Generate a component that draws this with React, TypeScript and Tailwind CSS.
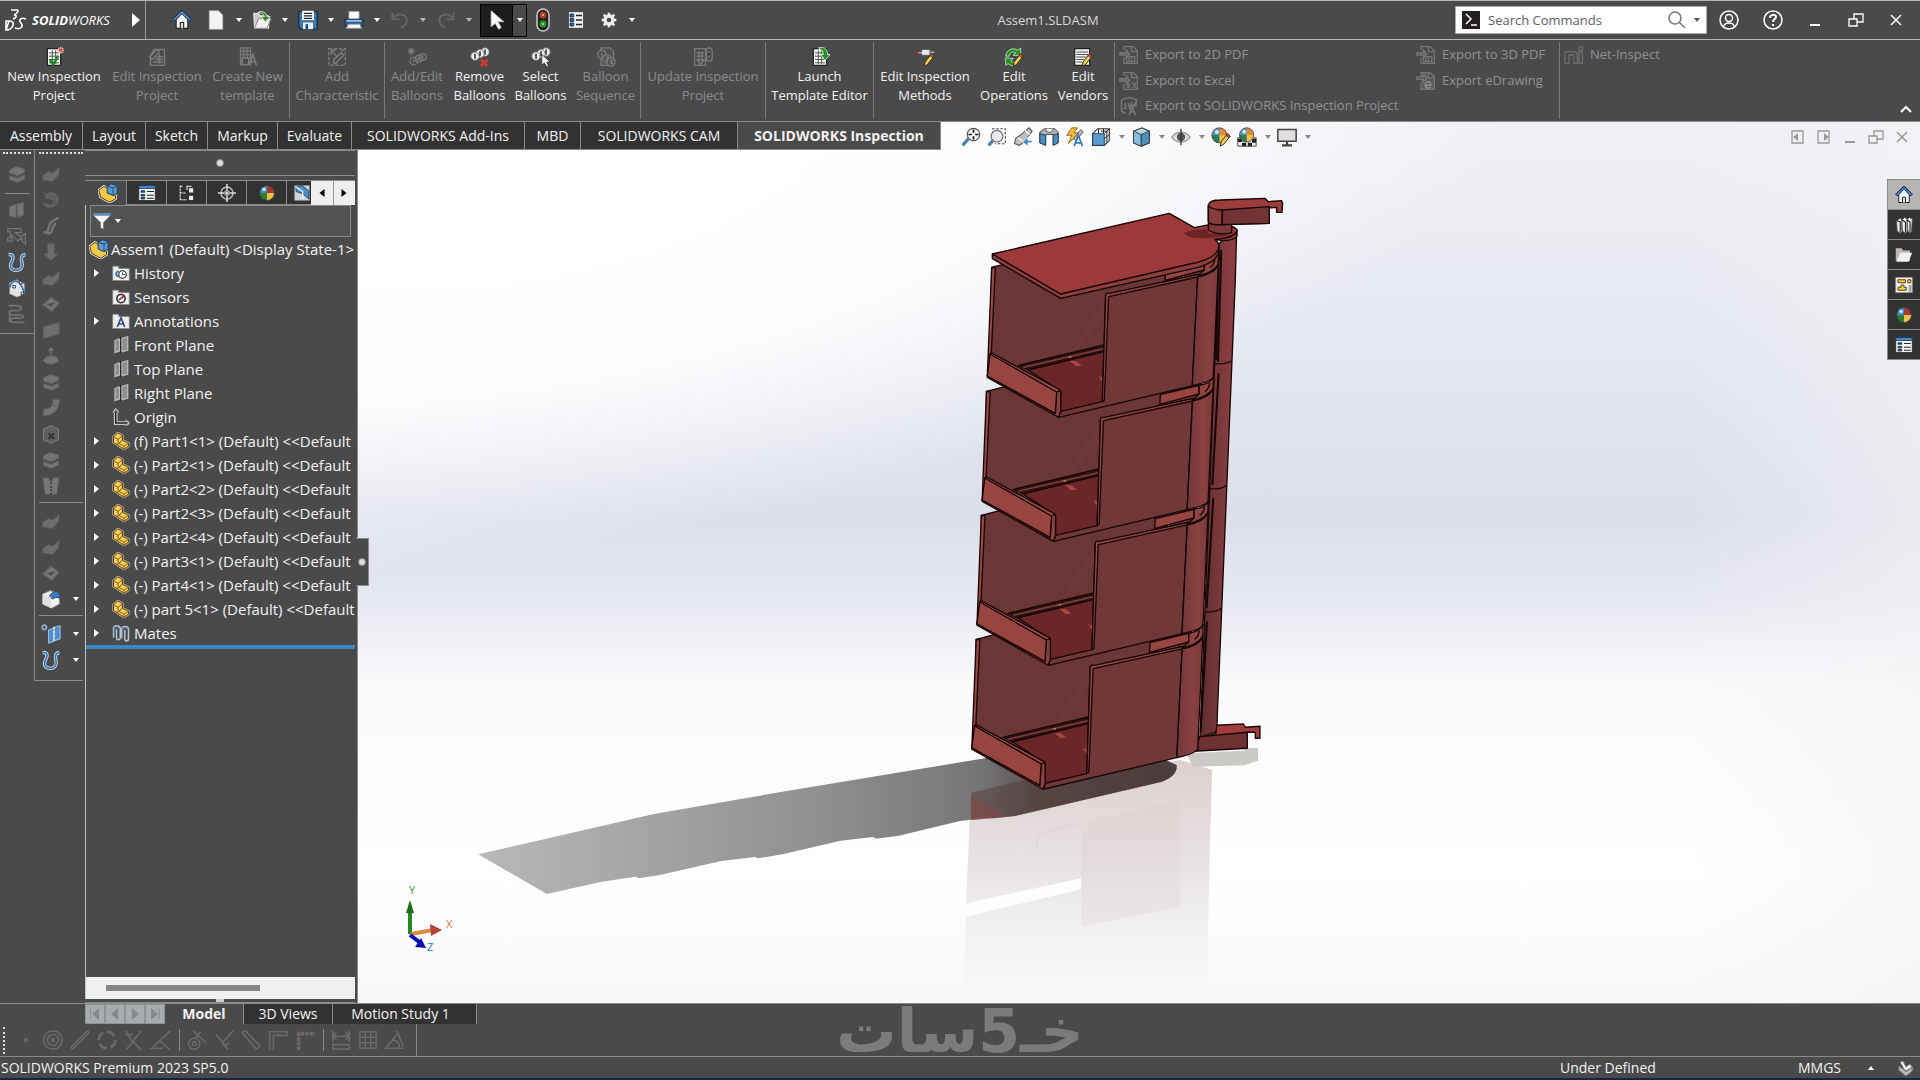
import type { ReactNode } from 'react';
import clsx from 'clsx';

const sheet = (
    <>
        <path d="M4 2h16v20H4z" fill="#f4f4f4" stroke="#222" strokeWidth="1.5" />
        <path d="M6 7h12M6 11h12M6 15h12M6 19h12M10 4v16M14 4v16" stroke="#555" strokeWidth="1.2" />
    </>
);

const pencil = (
    <>
        <path d="M20 8l3 3-8 10-4 2 1-5z" fill="#f0cf55" stroke="#3a2b10" strokeWidth="1.2" />
        <path d="M20 8l3 3-2 2-3-3z" fill="#d0524d" stroke="#3a2b10" />
    </>
);

const balloons = (
    <g fill="#eee" stroke="#777" strokeWidth="1">
        <circle cx="18" cy="6" r="5" />
        <circle cx="12" cy="8" r="5" />
        <circle cx="6" cy="11" r="5" />
        <path d="M6 8v6M12 5v6M18 3v6" stroke="#111" strokeWidth="1.6" />
    </g>
);

const globe = (
    <>
        <circle cx="12" cy="12" r="10" fill="#3c8bc4" />
        <path d="M12 12V2a10 10 0 0 1 10 10z" fill="#a93832" />
        <path d="M12 12h10a10 10 0 0 1-10 10z" fill="#f2c14b" />
        <path d="M12 12v10A10 10 0 0 1 2 12z" fill="#2d7d2d" />
        <circle cx="8" cy="7" r="2.5" fill="#bfe0f4" />
        <circle cx="12" cy="12" r="10" fill="none" stroke="#333" />
    </>
);

// half colour wheel, half wire mesh
const meshGlobe = (
    <>
        <circle cx="10" cy="10" r="9" fill="#4a93c9" />
        <path d="M10 10V1a9 9 0 0 1 9 9z" fill="#e08a3a" />
        <path d="M10 10h9a9 9 0 0 1-9 9z" fill="#f2c14b" />
        <path d="M10 10v9A9 9 0 0 1 1 10z" fill="#2d7d4d" />
        <circle cx="7" cy="6" r="2.5" fill="#cfe8f7" />
        <circle cx="10" cy="10" r="9" fill="none" stroke="#444" />
    </>
);

const house = (
    <>
        <path d="M5 11v11h14V11l-7-7z" fill="#f5f5f5" stroke="#222" strokeWidth="1.3" />
        <path d="M10 22v-7h4v7" fill="#ddd" stroke="#222" strokeWidth="1.3" />
        <path d="M1.5 12.5L12 2l10.5 10.5" fill="none" stroke="#16325c" strokeWidth="4" />
        <path d="M2 12L12 2.5 22 12" fill="none" stroke="#5f94cc" strokeWidth="1.8" />
    </>
);

const icons: Record<string, ReactNode> = {
    home: house,
    file: <path d="M4 1h11l5 5v17H4z" fill="#f4f4f4" stroke="#bbb" />,
    open: (
        <>
            <path d="M2 4h6l2 3h10v15H3z" fill="#cfcbc8" stroke="#fff" />
            <path d="M8 10h15l-5 12H3z" fill="#f2f2f2" stroke="#777" />
            <path d="M7 3c6-3 10 0 11 5h4l-6 6-5-6h4c-1-3-4-5-8-5z" fill="#2c8a1e" stroke="#e8e8e8" />
        </>
    ),
    save: (
        <>
            <path d="M1 2h22v21H4l-3-3z" fill="#3f79ad" stroke="#0f2b4c" strokeWidth="1.5" />
            <path d="M5 1h14v11H5z" fill="#fff" />
            <path d="M7 4h10M7 7h10M7 10h10" stroke="#222" strokeWidth="1.3" />
            <path d="M6 15h12v8H6z" fill="#efefef" />
            <path d="M9 17h3v6H9z" fill="#1f4a78" />
        </>
    ),
    print: (
        <>
            <path d="M6 2h12v9H6z" fill="#fff" stroke="#bbb" />
            <path d="M1 11h22v8H1z" fill="#2d5f8e" stroke="#10294a" />
            <path d="M3 13h18" stroke="#9fc8ea" strokeWidth="2" />
            <path d="M5 17h14l2 5H3z" fill="#f7f7f7" stroke="#999" />
        </>
    ),
    undo: <path d="M3 3v8h8M4 10c4-7 16-6 16 3 0 4-3 7-7 8" fill="none" stroke="#777" strokeWidth="2.5" />,
    redo: <path d="M21 3v8h-8M20 10C16 3 4 4 4 13c0 4 3 7 7 8" fill="none" stroke="#777" strokeWidth="2.5" />,
    cursor: <path d="M5 1v19l5-4 4 7 3-2-4-7h7z" fill="#fff" stroke="#ccc" />,
    traffic: (
        <>
            <rect x="6" y="1" width="12" height="22" rx="6" fill="#222" stroke="#ccc" strokeWidth="1.5" />
            <circle cx="12" cy="7" r="3.5" fill="#b33a22" />
            <circle cx="12" cy="16" r="3.5" fill="#259a25" />
            <path d="M12 6v2M12 15v2" stroke="#fff" />
        </>
    ),
    list: (
        <>
            <path d="M2 1h20v22H2z" fill="#f4f4f4" stroke="#333" />
            <path d="M4 4h5v4H4zM4 10h5v4H4zM4 16h5v4H4z" fill="#27639b" stroke="#123" />
            <path d="M12 6h8M12 12h8M12 18h8" stroke="#222" strokeWidth="2" />
        </>
    ),
    props: (
        <>
            <path d="M1 2h22v20H1z" fill="#f4f4f4" stroke="#222" />
            <path d="M1 2h22v4H1z" fill="#3f86c4" stroke="#14304f" />
            <path d="M4 9h5v2H4zM4 14h5v2H4zM4 18h5v2H4z" fill="#27639b" stroke="#123" />
            <path d="M12 10h9M12 15h9M12 19h9" stroke="#222" strokeWidth="1.5" />
        </>
    ),
    gear: (
        <>
            <circle cx="12" cy="12" r="6" fill="none" stroke="#eee" strokeWidth="5" />
            <path d="M12 1v4M12 19v4M1 12h4M19 12h4M4 4l3 3M17 17l3 3M4 20l3-3M17 7l3-3" stroke="#eee" strokeWidth="4" />
        </>
    ),
    newProject: (
        <>
            {sheet}
            <path d="M7 15l4 6 6-10" fill="none" stroke="#1d8a1d" strokeWidth="3" />
            <path d="M20 0v8M16 4h8M17 1l6 6M23 1l-6 6" stroke="#f2b8a0" strokeWidth="1.5" />
            <circle cx="20" cy="4" r="1.8" fill="#d33" />
        </>
    ),
    editProject: (
        <g fill="none" stroke="#7c7c7c" strokeWidth="1.6">
            <path d="M8 3h13v19H4V12zM12 3l-9 9 3 3 9-9zM11 12h8M9 15h10M7 18h12M15 8v12" />
        </g>
    ),
    template: (
        <g fill="none" stroke="#7a7a7a" strokeWidth="1.5">
            <path d="M3 1h12v20H3zM3 5h12M3 9h12M7 1v12M11 1v12" />
            <path d="M5 13h8v8H5zM14 22l4-13 4 13M15 18h6" strokeWidth="2" />
        </g>
    ),
    characteristic: (
        <g fill="none" stroke="#7a7a7a" strokeWidth="1.8">
            <path d="M2 2h20v20H2z" strokeDasharray="4 2" />
            <path d="M5 4l8 9M5 4v6M5 4h6M8 20v-5l9-8 3 3-9 9zM17 4h4" />
        </g>
    ),
    addBalloons: (
        <g fill="none" stroke="#7c7c7c" strokeWidth="1.5">
            <circle cx="19" cy="12" r="4" />
            <circle cx="14" cy="14" r="4" />
            <circle cx="8" cy="17" r="4.5" />
            <path d="M8 15v4M14 12v4M19 10v4M5 1v9M1 5h9M2 2l6 6M8 2L2 8" />
        </g>
    ),
    removeBalloons: <>{balloons}<path d="M13 15l8 8M21 15l-8 8" stroke="#cf3b35" strokeWidth="3.5" /></>,
    selectBalloons: <>{balloons}<path d="M13 9v13l3-3 3 5 2-1-2-5h4z" fill="#fff" stroke="#333" /></>,
    sequence: (
        <g fill="#505050" stroke="#7c7c7c" strokeWidth="1.5">
            <path d="M6 1h11l4 4v17H6z" />
            <circle cx="7" cy="9" r="5" />
            <circle cx="13" cy="14" r="5" />
            <circle cx="18" cy="18" r="5" />
            <path d="M7 7v5M12 12h3l-3 4h3M17 16h3l-2 2 2 2h-3" fill="none" />
        </g>
    ),
    update: (
        <g fill="none" stroke="#7c7c7c" strokeWidth="1.5">
            <path d="M2 2h13v20H2zM4 7h9M4 11h9M4 15h9M7 5v13M11 5v13M5 16l4 5 5-6" />
            <rect x="16" y="1" width="7" height="16" rx="3.5" />
            <path d="M19 5v2M19 11v2" strokeWidth="2.5" />
        </g>
    ),
    launch: <>{sheet}<path d="M10 1c8-2 11 2 11 8h3l-6 7-5-7h3c0-4-2-6-6-8z" fill="#219122" stroke="#dfe8df" /></>,
    methods: (
        <>
            <path d="M1 6h7V3h10v7H8V8H1z" fill="#e8e8e8" stroke="#555" />
            <path d="M18 5h5v3h-5z" fill="#bbb" stroke="#555" />
            <circle cx="2" cy="7" r="2" fill="#b23" />
            {pencil}
        </>
    ),
    operations: (
        <>
            <path d="M2 11C3 3 11 0 17 4l3-3v9h-9l3-3c-4-2-7 0-8 4z" fill="#219122" stroke="#cfe6cf" />
            <path d="M2 13v9l3-2c2 2 5 3 8 2l-1-4c-2 0-3 0-4-1l3-3z" fill="#219122" stroke="#cfe6cf" />
            {pencil}
        </>
    ),
    vendors: (
        <>
            <path d="M2 2h18v20H2z" fill="#f4f4f4" stroke="#222" strokeWidth="1.5" />
            <path d="M4 6h14M4 9h14M4 12h12M4 15h9M4 18h7" stroke="#555" strokeWidth="1.3" />
            {pencil}
        </>
    ),
    exportDoc: (
        <g fill="none" stroke="#777" strokeWidth="1.5">
            <path d="M6 6V2h11l5 5v15H6v-7M15 2v6h7" />
            <path d="M1 9h8V6l4 5-4 4v-3H1z" fill="#666" />
            <path d="M9 14h10v6H9zM12 14v6M15 14v6" />
        </g>
    ),
    exportExcel: (
        <g fill="none" stroke="#777" strokeWidth="1.5">
            <path d="M6 6V2h11l5 5v15H6v-7M15 2v6h7" />
            <path d="M1 9h8V6l4 5-4 4v-3H1z" fill="#666" />
            <path d="M9 16h5M9 19h5M11 14v7M16 13l5 8M21 13l-5 8" />
        </g>
    ),
    exportDrawing: (
        <g fill="none" stroke="#777" strokeWidth="1.5">
            <path d="M6 6V2h11l5 5v15H6v-7M15 2v6h7" fill="#5c5a58" />
            <path d="M1 7h8V4l4 5-4 4v-3H1z" fill="#555" />
            <path d="M11 17h7c0-6-7-5-7 0 0 4 5 4 7 2" stroke="#8a8a8a" strokeWidth="2" />
        </g>
    ),
    exportProject: (
        <g fill="none" stroke="#777" strokeWidth="1.8">
            <path d="M3 5c6-4 12-4 18 0l-1 8M3 5v13l5 3M8 8c-3 4 2 3 0 7H5M11 8l2 7 2-6 2 6 2-7M12 23l4-9 4 9M13 19h6" />
        </g>
    ),
    net: (
        <g fill="none" stroke="#6e6e6e" strokeWidth="1.5">
            <path d="M1 22V8h11c3 0 4 2 4 4v10h-4V12H6v10zM18 8h4v14h-4z" />
            <circle cx="20" cy="4" r="2.5" />
        </g>
    ),
    zoomFit: (
        <>
            <path d="M9 14l-7 8" stroke="#4a83b5" strokeWidth="4" />
            <circle cx="15" cy="9" r="7.5" fill="#f6f6f6" stroke="#555" strokeWidth="1.5" />
            <path d="M15 3v4M15 11v4M9 9h4M17 9h4" stroke="#111" strokeWidth="2" />
        </>
    ),
    zoomArea: (
        <>
            <path d="M6 2h16v18H10" fill="none" stroke="#444" strokeWidth="1.3" strokeDasharray="3 2" />
            <path d="M8 15l-6 7" stroke="#4a83b5" strokeWidth="4" />
            <circle cx="12" cy="11" r="7" fill="#e6eaee" stroke="#777" strokeWidth="1.5" />
        </>
    ),
    prevView: (
        <>
            <path d="M19 1l4 4-3 4-7 9-5 4-6-2 1-6 8-6z" fill="#bfbfbf" stroke="#555" strokeWidth="1.3" />
            <path d="M6 13l7 5M14 4l6 5" stroke="#fff" strokeWidth="1.5" />
            <path d="M23 16h-5v-4l-7 6 7 5v-4h5z" fill="#3f86c4" stroke="#fff" />
        </>
    ),
    section: (
        <>
            <path d="M1 6l6-4h12l4 4v13l-6 3V9H8v13l-7-3z" fill="#a9afb4" stroke="#333" />
            <path d="M1 8l7 2v12l-7-3zM17 10l6-2v11l-6 3z" fill="#4a90c9" stroke="#234" />
            <path d="M8 2l2 4h5l2-4" fill="#fff" stroke="#555" />
        </>
    ),
    annotViews: (
        <>
            <path d="M8 1h7l-4 6h6L4 20l4-10H2z" fill="#f5b93c" stroke="#8a5a10" />
            <path d="M19 3l3 3-9 10-3-2z" fill="#bbb" stroke="#444" />
            <path d="M11 23l5-13 5 13M13 19h7" fill="none" stroke="#3478b8" strokeWidth="2" />
        </>
    ),
    orient: (
        <>
            <path d="M2 8l6-6h14v14l-6 6H2z" fill="#eee" stroke="#333" strokeWidth="1.3" />
            <path d="M2 8h14v14H2z" fill="#5a9bd0" stroke="#234" />
            <path d="M16 8l6-6M9 2v6M15 2v6M22 9l-6 5M19 5v14M12 5h8" stroke="#333" strokeWidth="1.2" />
        </>
    ),
    cube: (
        <>
            <path d="M3 5l10-4 9 4v14l-9 4-10-4z" fill="#b9d9ec" stroke="#333" strokeWidth="1.3" />
            <path d="M12 9l10-4v14l-10 4z" fill="#4e90bf" stroke="#333" />
            <path d="M3 5l9 4v14l-9-4z" fill="#86bcdd" stroke="#333" />
        </>
    ),
    eye: (
        <>
            <path d="M1 12c6-8 16-8 22 0-6 8-16 8-22 0z" fill="#ddd" stroke="#999" strokeWidth="1.5" />
            <circle cx="12" cy="12" r="5" fill="#555" />
            <path d="M12 2v20" stroke="#333" strokeWidth="1.5" />
        </>
    ),
    appearance: <>{meshGlobe}{pencil}</>,
    scene: (
        <>
            <path d="M1 13h22v10H1z" fill="#eee" stroke="#333" />
            <path d="M1 14h5v4H1zM6 19h5v4H6zM13 19h5v4h-5zM18 14h5v5h-5z" fill="#222" />
            <g transform="translate(2 0) scale(.95)">{meshGlobe}</g>
        </>
    ),
    monitor: (
        <>
            <path d="M1 3h22v14H1z" fill="#e3dfdf" stroke="#444" strokeWidth="1.8" />
            <path d="M12 17v4M6 22h12" stroke="#444" strokeWidth="2.5" />
        </>
    ),
    assembly: (
        <>
            <path d="M1 9l6-5 5 3v5l9 3v4l-7 4L3 17z" fill="#f3c94c" stroke="#eee" strokeWidth="3" />
            <path d="M1 9l6-5 5 3v5l9 3v4l-7 4L3 17z" fill="#f3c94c" stroke="#5c3c10" strokeWidth="1.2" />
            <path d="M11 4l5-3 7 2v9l-5 3-7-3z" fill="#5b9bd2" stroke="#1d3f63" strokeWidth="1.2" />
            <path d="M11 4l7 2v9M18 6l5-3" fill="none" stroke="#1d3f63" />
        </>
    ),
    part: (
        <>
            <path d="M2 6l6-5 6 4v6l8 4v4l-6 4L2 14z" fill="none" stroke="#c9bda6" strokeWidth="3" />
            <path d="M2 6l6-5 6 4v6l8 4v4l-6 4L2 14z" fill="#f5cf55" stroke="#5c3c10" strokeWidth="1.3" />
            <path d="M2 6l6 4 6-5M8 10v7M14 11l-5 4 7 4 6-4M16 19v4" fill="none" stroke="#7a5214" strokeWidth="1.2" />
        </>
    ),
    config: (
        <g fill="none" stroke="#eee" strokeWidth="1.5">
            <path d="M3 2v20M3 3h4M3 12h8M3 21h9" strokeDasharray="3 1" />
            <path d="M12 8V3h6" />
            <path d="M14 5h7v7h-7zM14 15h7v7h-7z" fill="#eee" stroke="#333" />
        </g>
    ),
    target: (
        <g fill="none" stroke="#bbb" strokeWidth="2">
            <circle cx="12" cy="12" r="8" />
            <path d="M12 0v24M0 12h24" stroke="#ddd" />
            <circle cx="12" cy="12" r="3" stroke="#999" />
        </g>
    ),
    globe,
    cam: (
        <>
            <path d="M2 2h20v20H2z" fill="#cdd3d8" />
            <path d="M4 4l8-2 9 7v11l-8-7-9-3z" fill="#4b8fca" stroke="#234" />
            <path d="M4 4l9 6v10" fill="none" stroke="#fff" strokeWidth="1.5" />
        </>
    ),
    filter: (
        <>
            <path d="M1 2h22v3l-9 9v9l-4-2v-7L1 5z" fill="#f4f4f4" stroke="#777" />
            <path d="M1 2h22v3H1z" fill="#4a8fc9" />
        </>
    ),
    history: (
        <>
            <path d="M1 3h8v3h14v16H1z" fill="#f1eded" stroke="#888" />
            <path d="M9 17c-5-2-4-7 0-7" fill="none" stroke="#2e7ab8" strokeWidth="2.5" />
            <circle cx="14" cy="14" r="5" fill="#fff" stroke="#222" strokeWidth="1.5" />
            <path d="M14 11v3h3" fill="none" stroke="#222" />
        </>
    ),
    sensors: (
        <>
            <path d="M1 3h8v3h14v16H1z" fill="#f1eded" stroke="#888" />
            <circle cx="12" cy="14" r="5.5" fill="#fff" stroke="#222" strokeWidth="2" />
            <path d="M12 14l4-4" stroke="#c33" strokeWidth="2.5" />
            <path d="M9 16l3-2" stroke="#222" strokeWidth="2" />
        </>
    ),
    annotations: (
        <>
            <path d="M1 3h8v3h14v16H1z" fill="#f1eded" stroke="#888" />
            <path d="M7 20l5-12 5 12M9 16h6" fill="none" stroke="#1f4e85" strokeWidth="2.2" />
        </>
    ),
    plane: (
        <>
            <path d="M4 6l6-2v16l-6 2zM13 3l8-2v18l-8 2z" fill="#8e8e8e" stroke="#c4c4c4" strokeWidth="1.5" />
            <path d="M11.5 1v22" stroke="#222" strokeWidth="1.8" strokeDasharray="5 1" />
        </>
    ),
    origin: (
        <>
            <path d="M5 3v17h17" fill="none" stroke="#c9c9c9" strokeWidth="5" />
            <path d="M5 3v17h17" fill="none" stroke="#222" strokeWidth="2" />
            <path d="M1 6l4-5 4 5M18 16l5 4-5 4" fill="#555" stroke="#c9c9c9" strokeWidth="1.5" />
        </>
    ),
    mates: (
        <g fill="none" stroke="#b9c3d0" strokeWidth="2">
            <path d="M2 18V6c0-5 9-5 9 0v12c0 4-5 4-5 0V7" />
            <path d="M13 19V7c0-5 9-5 9 0v12c0 5-5 5-5 0V8" />
            <path d="M3 18V6c0-3 6-3 6 0M14 19V7c0-3 6-3 6 0" stroke="#5f86bb" strokeWidth="1.5" />
        </g>
    ),
    curveBlue: (
        <>
            <path d="M2 3c8 0 5 6 3 10-2 5 0 9 6 9s8-4 7-9c-1-4-2-9 4-10" fill="none" stroke="#ddd" strokeWidth="4" />
            <path d="M2 3c8 0 5 6 3 10-2 5 0 9 6 9s8-4 7-9c-1-4-2-9 4-10" fill="none" stroke="#2f79bd" strokeWidth="2" />
        </>
    ),
    block: <path d="M3 7l8-4 10 3v4l-8 4-10-3zM3 14l10 3 8-4v5l-8 4-10-3z" fill="#737373" stroke="#626262" />,
    slab: <path d="M3 8l8-3v16l-8-2zM12 5l8-2v15l-7 3z" fill="#757575" stroke="#626262" />,
    flow: <path d="M1 3h16v5h-7l6 5 6-4v13l-4-4v-4l-5 4-7-7v7H1v-4h3V7H1z" fill="none" stroke="#757575" strokeWidth="1.5" />,
    coil: <path d="M2 2h10c6 0 7 6 1 6H6c-4 0-4 5 0 5h8c7 0 7 4 2 4H7c-4 0-3 5 0 5h14M18 3h-4M3 8v14" fill="none" stroke="#747474" strokeWidth="2" />,
    splineCube: (
        <>
            <path d="M3 6l8-4 10 5v12l-9 4-9-4z" fill="#e5e5e5" stroke="#888" />
            <path d="M3 12c3-12 14-12 18 8" fill="none" stroke="#2f79bd" strokeWidth="2" />
            <path d="M7 9h3v3H7zM15 4h3v3h-3zM17 17h3v3h-3z" fill="#fff" stroke="#222" />
        </>
    ),
    loft: <path d="M2 14l7-5 5 2 8-7-1 9-7 8-12-2z" fill="#6d6d6d" stroke="#5d5d5d" />,
    ring: <path d="M4 8c7-9 19-3 16 6-4 9-15 8-17 2l6 2c9 2 8-9-2-8zM3 3l7 5" fill="#5c5c5c" stroke="#707070" />,
    sweep: <path d="M3 19c9 5 3-9 11-13l7-4M8 21c8 1 3-9 10-12" fill="none" stroke="#747474" strokeWidth="3" />,
    down: <path d="M8 2h8v12h5l-9 8-9-8h5z" fill="#6d6d6d" stroke="#5d5d5d" />,
    patch: <path d="M2 13l10-9 10 7-9 10zM7 12l5 3 5-5" fill="#777" stroke="#5d5d5d" strokeWidth="1.5" />,
    sheetFlat: <path d="M3 8l19-5v14L3 22z" fill="#6d6d6d" stroke="#5d5d5d" />,
    puff: <path d="M12 1l4 5h-3v6c6 0 8 3 8 6-3 5-15 5-18 0 0-3 3-6 8-6V6H8z" fill="#757575" stroke="#5d5d5d" />,
    bend: <path d="M2 21l2-8c8 0 10-3 10-11h8c0 13-8 20-20 19zM14 9h7" fill="#757575" stroke="#5d5d5d" />,
    boxX: (
        <>
            <path d="M3 6l9-4 9 4v13l-9 4-9-4z" fill="#606060" stroke="#858585" />
            <path d="M9 11l7 7M16 11l-7 7" stroke="#333" strokeWidth="2.5" />
        </>
    ),
    zip: (
        <>
            <path d="M2 2h7l3 6 3-6h7l-3 20H5z" fill="#777" stroke="#5d5d5d" />
            <path d="M12 8v14" stroke="#444" strokeWidth="2.5" strokeDasharray="2 2" />
        </>
    ),
    blueCube: (
        <>
            <path d="M2 6l9-4 11 4v12l-9 5-11-5z" fill="#f2f2f2" stroke="#999" />
            <path d="M10 9c2-4 5-6 9-6l3 3v5c-4-2-6 0-8 1z" fill="#3b7dc0" stroke="#1d3f63" />
            <path d="M2 6l10 4v13l-10-5z" fill="#e1e1e1" />
        </>
    ),
    refPlane: (
        <>
            <path d="M9 7l6-2v16l-6 2zM16 4l7-2v16l-7 2z" fill="#4a90cf" stroke="#bcd" />
            <path d="M15.5 3v20" stroke="#eee" strokeWidth="1.5" strokeDasharray="3 2" />
            <circle cx="4" cy="4" r="3" fill="#3577b5" stroke="#ddd" />
        </>
    ),
    library: (
        <>
            <path d="M2 6l5-3 2 2v16l-2 2-4-3zM9 5l4-3 3 2v17l-2 2-4-3zM16 5l3-3 4 2-1 17-2 2-3-3z" fill="#eee" stroke="#555" />
            <path d="M2 6l5 2v14M9 5l5 3v14M16 5l4 3v14" fill="none" stroke="#222" strokeWidth="1.5" />
        </>
    ),
    folder: (
        <>
            <path d="M1 3h8l2 3h9v14H1z" fill="#bdb9b7" />
            <path d="M7 9h16l-5 12H2z" fill="#f1f1f1" />
        </>
    ),
    palette: (
        <>
            <path d="M1 2h22v20H1z" fill="#f4f4f4" stroke="#999" />
            <path d="M4 5h10v4H4zM17 5h4v4h-4zM4 19h11v-4h-3v-3H8v3H4z" fill="#f5cc45" stroke="#5c3c10" strokeWidth="1.3" />
            <path d="M18 12h4v9h-4z" fill="#aaa" />
        </>
    ),
    sCircle: <><circle cx="12" cy="12" r="10" /><circle cx="12" cy="12" r="6" /><path d="M10 10l4 4M14 10l-4 4" /></>,
    sPoint: <path d="M10 10l4 4M14 10l-4 4" />,
    sLine: <path d="M2 20L20 2M4 22L22 4M2 20l2 2M20 2l2 2" />,
    sDash: <circle cx="12" cy="12" r="9" strokeWidth="3" strokeDasharray="10 4" />,
    sCross: <path d="M3 2l6 10 11 11M20 2L4 22M3 6h8" />,
    sTrim: <path d="M22 2L2 21h12M11 13l11 10" />,
    sTangent: <><circle cx="9" cy="16" r="6" /><circle cx="9" cy="16" r="2" /><path d="M8 2l14 13M10 10L16 3" /></>,
    sNormal: <path d="M3 6l11 12 4-3M22 2L10 15l6 7" />,
    sParallel: <path d="M2 4l16 18M6 2l16 17M2 4l4-2M18 22l4-3" />,
    sCorner: <path d="M3 23V3h19v4H7v16" />,
    sCornerDash: <path d="M5 23V5h18" strokeWidth="4" strokeDasharray="4 1" />,
    sDim: <path d="M3 2v12M21 2v12M3 8h18M7 4L3 8l4 4M17 4l4 4-4 4M3 17h18v5H3z" />,
    sGrid: <path d="M3 3h18v18H3zM3 9h18M3 15h18M9 3v18M15 3v18" />,
    sAngle: <path d="M22 21H2L14 6M10 12c5 1 7 4 7 9M14 2l7 17" />,
};

function Icon({ name, className = 'size-5' }: { name: string; className?: string }) {
    return (
        <svg viewBox="0 0 24 24" className={clsx('shrink-0', className)} aria-hidden="true">
            {icons[name]}
        </svg>
    );
}

function Caret({ className = 'text-white' }: { className?: string }) {
    return (
        <svg viewBox="0 0 6 4" className={clsx('h-1 w-1.5 shrink-0', className)} aria-hidden="true">
            <path d="M0 0h6L3 4z" fill="currentColor" />
        </svg>
    );
}

function MenuButton({ icon, label, disabled }: { icon: string; label: string; disabled?: boolean }) {
    return (
        <button aria-label={label} disabled={disabled} className={clsx('flex w-[46px] items-center gap-2.5 pl-0.5', disabled && 'opacity-60')}>
            <Icon name={icon} />
            <Caret />
        </button>
    );
}

function TitleBar() {
    return (
        <header className="flex h-10 shrink-0 items-center border-y border-[#b4b4b4]">
            <div className="flex h-full w-[641px] shrink-0 items-center">
                <div className="flex h-full w-[146px] items-center border-r border-[#9a9a9a] pl-1">
                    <svg viewBox="0 0 24 24" className="size-6" fill="none" stroke="#fff" strokeWidth="1.6" aria-hidden="true">
                        <path d="M7 2h6c2 0 1 3-3 5M10 7c4 0 2 3-1 4M2 13h4c6 0 3 9-4 9zM2 22l3-9M22 11c-5-2-8 1-5 4 3 4-1 7-6 5" />
                    </svg>
                    <span className="ml-1 w-[100px] text-[13px] italic leading-5 text-white">
                        <b>SOLID</b>WORKS
                    </span>
                    <svg viewBox="0 0 8 14" className="h-3.5 w-2" aria-hidden="true">
                        <path d="M0 0l8 7-8 7z" fill="#fff" />
                    </svg>
                </div>
                <button aria-label="Home" className="ml-[26px] mr-3"><Icon name="home" /></button>
                <MenuButton icon="file" label="New" />
                <MenuButton icon="open" label="Open" />
                <MenuButton icon="save" label="Save" />
                <MenuButton icon="print" label="Print" />
                <MenuButton icon="undo" label="Undo" disabled />
                <MenuButton icon="redo" label="Redo" disabled />
                <button aria-label="Select" className="flex h-[33px] w-[47px] items-center border border-black bg-[#1d1b1e]">
                    <span className="flex h-full w-8 items-center justify-center border-r border-black"><Icon name="cursor" /></span>
                    <span className="flex h-full flex-1 items-center justify-center bg-[#4a4a4a]"><Caret /></span>
                </button>
                <button aria-label="Rebuild" className="ml-1"><Icon name="traffic" className="size-6" /></button>
                <button aria-label="File Properties" className="ml-3"><Icon name="list" className="size-[18px]" /></button>
                <button aria-label="Options" className="ml-4 flex items-center gap-3"><Icon name="gear" className="size-4" /><Caret /></button>
            </div>
            <h1 className="flex-1 pt-0.5 text-center text-[13px] text-[#d8d8d8]">Assem1.SLDASM</h1>
            <div className="flex w-[465px] shrink-0 items-center">
                <div className="flex h-7 w-[252px] items-center gap-2 border border-[#aaa] bg-white px-1.5">
                    <svg viewBox="0 0 18 18" className="size-[18px]" aria-hidden="true">
                        <path d="M0 0h18v18H0z" fill="#241f21" />
                        <path d="M4 3l5 5-5 5M9 14h6" fill="none" stroke="#fff" strokeWidth="1.5" />
                    </svg>
                    <input aria-label="Search Commands" placeholder="Search Commands" className="w-[172px] bg-transparent pt-0.5 text-[13px] outline-none placeholder:text-[#5c6166]" />
                    <svg viewBox="0 0 18 18" className="size-[18px]" fill="none" stroke="#777" strokeWidth="1.5" aria-hidden="true">
                        <circle cx="7" cy="7" r="6" />
                        <path d="M11 11l6 6" />
                    </svg>
                    <Caret className="text-[#555]" />
                </div>
                <div className="flex flex-1 items-center justify-around pr-1">
                    <button aria-label="Login">
                        <svg viewBox="0 0 20 20" className="size-5" fill="none" stroke="#fff" strokeWidth="1.5">
                            <circle cx="10" cy="10" r="9" />
                            <circle cx="10" cy="8" r="3.5" />
                            <path d="M5 16c1-4 9-4 10 0" />
                        </svg>
                    </button>
                    <button aria-label="Help">
                        <svg viewBox="0 0 20 20" className="size-5" fill="none" stroke="#fff" strokeWidth="1.5">
                            <circle cx="10" cy="10" r="9" />
                            <path d="M7 8c0-4 6-4 6-1 0 2-3 2-3 5M10 14v2" strokeWidth="2" />
                        </svg>
                    </button>
                    <WindowButtons className="text-white" />
                </div>
            </div>
        </header>
    );
}

function WindowButtons({ className }: { className: string }) {
    return (
        <>
            <button aria-label="Minimize" className={className}>
                <svg viewBox="0 0 16 16" className="size-4"><path d="M3 13h10" stroke="currentColor" strokeWidth="2" /></svg>
            </button>
            <button aria-label="Restore" className={className}>
                <svg viewBox="0 0 16 16" className="size-4" fill="none" stroke="currentColor" strokeWidth="1.3">
                    <path d="M1 7h8v7H1zM6 7V2h9v8H9" />
                </svg>
            </button>
            <button aria-label="Close" className={className}>
                <svg viewBox="0 0 16 16" className="size-4"><path d="M3 3l10 10M13 3L3 13" stroke="currentColor" strokeWidth="1.5" /></svg>
            </button>
        </>
    );
}

type Command = { lines: [string, string]; icon: string; width: string; disabled?: boolean };

const ribbon: Command[][] = [
    [
        { lines: ['New Inspection', 'Project'], icon: 'newProject', width: 'w-[108px]' },
        { lines: ['Edit Inspection', 'Project'], icon: 'editProject', width: 'w-[98px]', disabled: true },
        { lines: ['Create New', 'template'], icon: 'template', width: 'w-[83px]', disabled: true },
    ],
    [{ lines: ['Add', 'Characteristic'], icon: 'characteristic', width: 'w-[94px]', disabled: true }],
    [
        { lines: ['Add/Edit', 'Balloons'], icon: 'addBalloons', width: 'w-16', disabled: true },
        { lines: ['Remove', 'Balloons'], icon: 'removeBalloons', width: 'w-[61px]' },
        { lines: ['Select', 'Balloons'], icon: 'selectBalloons', width: 'w-[61px]' },
        { lines: ['Balloon', 'Sequence'], icon: 'sequence', width: 'w-[69px]', disabled: true },
    ],
    [{ lines: ['Update Inspection', 'Project'], icon: 'update', width: 'w-[124px]', disabled: true }],
    [{ lines: ['Launch', 'Template Editor'], icon: 'launch', width: 'w-[107px]' }],
    [
        { lines: ['Edit Inspection', 'Methods'], icon: 'methods', width: 'w-[102px]' },
        { lines: ['Edit', 'Operations'], icon: 'operations', width: 'w-[76px]' },
        { lines: ['Edit', 'Vendors'], icon: 'vendors', width: 'w-[62px]' },
    ],
];

function ExportItem({ icon, label }: { icon: string; label: string }) {
    return (
        <button disabled className="flex h-[26px] items-center gap-1.5 whitespace-nowrap text-[13px] text-[#919195]">
            <Icon name={icon} />
            {label}
        </button>
    );
}

function Ribbon() {
    return (
        <div className="flex h-[82px] shrink-0 border-b border-[#8a8a8a] pt-0.5">
            {ribbon.map((group) => (
                <div key={group[0].icon} className="mb-0.5 flex shrink-0 border-r border-[#7a7a7a]">
                    {group.map(({ lines, icon, width, disabled }) => (
                        <button
                            key={icon}
                            disabled={disabled}
                            className={clsx('flex flex-col items-center whitespace-nowrap pt-[5px] text-[13px] leading-[19px]', width, disabled ? 'text-[#8a8a8e]' : 'text-[#f2f2f2]')}
                        >
                            <Icon name={icon} />
                            <span>{lines[0]}</span>
                            <span>{lines[1]}</span>
                        </button>
                    ))}
                </div>
            ))}
            <div className="mb-0.5 flex w-[445px] shrink-0 border-r border-[#7a7a7a] pl-1">
                <div className="flex w-[297px] flex-col">
                    <ExportItem icon="exportDoc" label="Export to 2D PDF" />
                    <ExportItem icon="exportExcel" label="Export to Excel" />
                    <ExportItem icon="exportProject" label="Export to SOLIDWORKS Inspection Project" />
                </div>
                <div className="flex flex-col">
                    <ExportItem icon="exportDoc" label="Export to 3D PDF" />
                    <ExportItem icon="exportDrawing" label="Export eDrawing" />
                </div>
            </div>
            <div className="pl-1"><ExportItem icon="net" label="Net-Inspect" /></div>
            <button aria-label="Collapse ribbon" className="ml-auto mr-2 flex items-end pb-2">
                <svg viewBox="0 0 12 8" className="h-2 w-3"><path d="M1 7l5-5 5 5" fill="none" stroke="#fff" strokeWidth="2" /></svg>
            </button>
        </div>
    );
}

const commandTabs = [
    { label: 'Assembly', width: 'w-[83px]' },
    { label: 'Layout', width: 'w-[63px]' },
    { label: 'Sketch', width: 'w-[62px]' },
    { label: 'Markup', width: 'w-[70px]' },
    { label: 'Evaluate', width: 'w-[74px]' },
    { label: 'SOLIDWORKS Add-Ins', width: 'w-[173px]' },
    { label: 'MBD', width: 'w-14' },
    { label: 'SOLIDWORKS CAM', width: 'w-[157px]' },
    { label: 'SOLIDWORKS Inspection', width: 'w-[203px]', active: true },
];

const viewTools: { icon: string; label: string; menu?: boolean }[] = [
    { icon: 'zoomFit', label: 'Zoom to Fit' },
    { icon: 'zoomArea', label: 'Zoom to Area' },
    { icon: 'prevView', label: 'Previous View' },
    { icon: 'section', label: 'Section View' },
    { icon: 'annotViews', label: 'Dynamic Annotation Views' },
    { icon: 'orient', label: 'View Orientation', menu: true },
    { icon: 'cube', label: 'Display Style', menu: true },
    { icon: 'eye', label: 'Hide/Show Items', menu: true },
    { icon: 'appearance', label: 'Edit Appearance' },
    { icon: 'scene', label: 'Apply Scene', menu: true },
    { icon: 'monitor', label: 'View Settings', menu: true },
];

function CommandTabs() {
    return (
        <div className="z-10 col-span-2 col-start-1 row-start-1 flex">
            <div role="tablist" className="flex shrink-0">
                {commandTabs.map(({ label, width, active }) => (
                    <button
                        key={label}
                        role="tab"
                        aria-selected={!!active}
                        className={clsx(
                            'whitespace-nowrap border-b border-r border-[#8a8a8a] text-sm text-[#f2f2f2]',
                            width,
                            active ? 'bg-[#4a4a4a] font-bold' : 'bg-[#323232]',
                        )}
                    >
                        {label}
                    </button>
                ))}
            </div>
            <div className="ml-5 flex shrink-0 items-center gap-1.5 pt-0.5">
                {viewTools.map(({ icon, label, menu }) => (
                    <button key={icon} aria-label={label} className="flex items-center gap-2">
                        <Icon name={icon} />
                        {menu && <Caret className="text-[#888]" />}
                    </button>
                ))}
            </div>
            <div className="ml-auto mr-2.5 flex items-center gap-2.5 pt-0.5 text-[#999]">
                <button aria-label="Previous pane">
                    <svg viewBox="0 0 16 16" className="size-4"><path d="M2 2h11v12H2z" fill="none" stroke="currentColor" strokeWidth="1.3" /><path d="M8 4v8L3 8z" fill="currentColor" /></svg>
                </button>
                <button aria-label="Next pane">
                    <svg viewBox="0 0 16 16" className="size-4"><path d="M2 2h11v12H2z" fill="none" stroke="currentColor" strokeWidth="1.3" /><path d="M8 4v8l5-4z" fill="currentColor" /></svg>
                </button>
                <WindowButtons className="text-[#999]" />
            </div>
        </div>
    );
}

const surfaceTools = ['loft', 'ring', 'sweep', 'down', 'loft', 'patch', 'sheetFlat', 'puff', 'block', 'bend', 'boxX', 'block', 'zip'];

function ToolColumns() {
    return (
        <div className="flex items-start">
            <div className="flex h-[184px] w-[34px] flex-col items-center border-b border-[#8a8a8a]">
                <div className="mt-0.5 w-7 border-t-2 border-dotted border-[#ddd]" />
                <div className="mt-2.5 flex h-[30px] w-[25px] justify-center border-b border-[#8a8a8a]"><Icon name="block" /></div>
                {['slab', 'flow', 'curveBlue', 'splineCube', 'coil'].map((icon) => (
                    <button key={icon} aria-label={icon} className="mt-1.5"><Icon name={icon} /></button>
                ))}
            </div>
            <div className="flex h-[531px] w-[49px] flex-col border-b border-l border-[#8a8a8a] pl-1">
                <div className="mt-0.5 border-t-2 border-dotted border-[#ddd]" />
                <div className="mt-2.5 flex flex-col gap-1.5 border-b border-[#8a8a8a] pb-1.5 pl-0.5">
                    {surfaceTools.map((icon, i) => (
                        <button key={i} aria-label={`Surface tool ${i + 1}`} disabled><Icon name={icon} /></button>
                    ))}
                </div>
                <div className="mt-2 flex flex-col gap-1.5 border-b border-[#8a8a8a] pb-1.5 pl-0.5">
                    {['loft', 'loft', 'patch'].map((icon, i) => (
                        <button key={i} aria-label={`Edit surface ${i + 1}`} disabled><Icon name={icon} /></button>
                    ))}
                    <button aria-label="Fillet" className="flex items-center gap-3"><Icon name="blueCube" /><Caret /></button>
                </div>
                <div className="mt-2 flex flex-col gap-1.5 pl-0.5">
                    <button aria-label="Reference geometry" className="flex items-center gap-3"><Icon name="refPlane" /><Caret /></button>
                    <button aria-label="Curves" className="flex items-center gap-3"><Icon name="curveBlue" /><Caret /></button>
                </div>
            </div>
        </div>
    );
}

const treeItems = [
    { label: 'History', icon: 'history', expandable: true },
    { label: 'Sensors', icon: 'sensors' },
    { label: 'Annotations', icon: 'annotations', expandable: true },
    { label: 'Front Plane', icon: 'plane' },
    { label: 'Top Plane', icon: 'plane' },
    { label: 'Right Plane', icon: 'plane' },
    { label: 'Origin', icon: 'origin' },
    { label: '(f) Part1<1> (Default) <<Default', icon: 'part', expandable: true },
    { label: '(-) Part2<1> (Default) <<Default', icon: 'part', expandable: true },
    { label: '(-) Part2<2> (Default) <<Default', icon: 'part', expandable: true },
    { label: '(-) Part2<3> (Default) <<Default', icon: 'part', expandable: true },
    { label: '(-) Part2<4> (Default) <<Default', icon: 'part', expandable: true },
    { label: '(-) Part3<1> (Default) <<Default', icon: 'part', expandable: true },
    { label: '(-) Part4<1> (Default) <<Default', icon: 'part', expandable: true },
    { label: '(-) part 5<1> (Default) <<Default', icon: 'part', expandable: true },
    { label: 'Mates', icon: 'mates', expandable: true },
];

const managerTabs = ['props', 'config', 'target', 'globe'];

function FeatureTree() {
    return (
        <aside className="relative ml-0.5 flex min-h-0 flex-1 flex-col border-r border-[#8a8a8a] pr-0.5">
            <div className="flex h-[26px] items-center justify-center border-y border-[#8a8a8a]">
                <span className="size-2 rounded-full border border-[#888] bg-[#ddd]" />
            </div>
            <div role="tablist" className="mt-1 flex h-[25px] border-t border-[#8a8a8a]">
                <button role="tab" aria-selected="true" aria-label="FeatureManager" className="flex w-[42px] items-center justify-center border-r border-[#8a8a8a] pl-1">
                    <Icon name="assembly" />
                </button>
                {managerTabs.map((icon) => (
                    <button key={icon} role="tab" aria-selected="false" aria-label={icon} className="flex w-10 items-center justify-center border-b border-r border-[#8a8a8a] bg-[#323232]">
                        <Icon name={icon} className="size-[18px]" />
                    </button>
                ))}
                <button role="tab" aria-selected="false" aria-label="cam" className="flex w-6 items-center justify-end overflow-hidden border-b border-[#8a8a8a] bg-[#323232]">
                    <Icon name="cam" className="size-[18px]" />
                </button>
                <button aria-label="Scroll tabs left" className="flex flex-1 items-center justify-center border-r border-[#999] bg-[#eee]">
                    <svg viewBox="0 0 5 8" className="h-2 w-1.5"><path d="M5 0v8L0 4z" /></svg>
                </button>
                <button aria-label="Scroll tabs right" className="flex flex-1 items-center justify-center bg-[#eee]">
                    <svg viewBox="0 0 5 8" className="h-2 w-1.5"><path d="M0 0v8l5-4z" /></svg>
                </button>
            </div>
            <div className="flex min-h-0 flex-1 flex-col border-l border-[#c4c4c4]">
                <div className="ml-1 mr-1 flex h-8 shrink-0 items-center gap-1 border border-[#8a8a8a] bg-[#525252] px-0.5">
                    <Icon name="filter" className="size-[18px]" />
                    <Caret />
                </div>
                <ul role="tree" className="overflow-hidden border-b-4 border-[#3f83bd] text-[15px] text-[#f2f2f2]">
                    <li role="treeitem" className="flex h-6 items-center gap-0.5 whitespace-nowrap pl-[3px]">
                        <Icon name="assembly" />
                        Assem1 (Default) &lt;Display State-1&gt;
                    </li>
                    {treeItems.map(({ label, icon, expandable }) => (
                        <li key={label} role="treeitem" className="flex h-6 items-center whitespace-nowrap pl-2">
                            <span className="w-[18px]">
                                {expandable && <svg viewBox="0 0 5 8" className="h-2 w-[5px]"><path d="M0 0v8l5-4z" fill="#fff" /></svg>}
                            </span>
                            <Icon name={icon} className="size-[18px]" />
                            <span className="ml-1">{label}</span>
                        </li>
                    ))}
                </ul>
                <div className="mt-auto flex h-[22px] shrink-0 items-center bg-[#f0f0f0] pl-5">
                    <div className="h-1.5 w-[154px] bg-[#858585]" />
                </div>
            </div>
            <div className="flex h-1 justify-center border-b border-[#8a8a8a]"><span className="w-2 bg-[#ccc]" /></div>
            {/* splitter grip hangs over the graphics area */}
            <button aria-label="Hide tree" className="absolute -right-3 top-[388px] flex h-12 w-[13px] items-center justify-center border border-l-0 border-[#8a8a8a] bg-[#4a4a4a]">
                <span className="size-2 rounded-full border border-[#888] bg-[#ddd]" />
            </button>
        </aside>
    );
}

const edge = { stroke: '#160606', strokeWidth: 4, strokeLinejoin: 'round' as const };

function Bin({ index }: { index: number }) {
    return (
        <g transform={`translate(${index * -15.5} ${index * 372})`} {...edge}>
            <path d="M95 262L150 248 440 290 740 240 700 612 300 700 92 520z" fill="#6b3636" />
            <path d="M375 445L437 360V405L330 530z" fill="#7a403f" stroke="none" opacity=".35" />
            <path d="M175 556L432 495V518L205 570z" fill="#2c1111" />
            <path d="M190 562L432 506" stroke="#7b3c3a" strokeWidth="5" />
            <path d="M205 570L432 515V668L302 695V634z" fill="#6b2728" />
            <path d="M330 543h18l18 14-18 2zM415 588l15 5v18z" fill="#ab4442" stroke="none" />
            <path d="M322 531l12-3v5z" fill="#e59a3b" stroke="none" />
            <path d="M95 262L106 264 94 518 82 588z" fill="#984845" />
            <path d="M94 518L300 630V640L290 638 90 524z" fill="#a14d49" />
            <path d="M437 346Q438 338 448 342L713 284 697 617 600 640 296 712 302 694 427 665z" fill="#713838" />
            <path d="M290 636L302 632V694L296 712 82 592V586L286 700z" fill="#8a413f" />
            <path d="M90 522L290 636 286 700 82 588z" fill="#984542" />
            <path d="M437 346Q438 338 448 340L713 284Q745 278 775 248L770 262Q745 286 713 291L446 350 433 661 427 664z" fill="#934743" />
            <path d="M713 291Q762 282 775 255L760 590Q755 605 697 617z" fill="url(#side)" />
            <path d="M617 272L733 244V270L615 301z" fill="#984542" />
            <path d="M733 244Q768 238 776 218L775 250Q766 276 713 288L733 270z" fill="#8f4441" />
            <path d="M750 262Q764 254 764 236" fill="none" />
        </g>
    );
}

function Model() {
    return (
        <g transform="translate(960 180) scale(.3333)">
            <g {...edge}>
                <path d="M778 190L830 150 826 300 770 1655 720 1672z" fill="url(#pole)" />
                <path d="M784 210L774 545M776 580L757 915M760 955L740 1285M741 1325L722 1655M776 215L768 540" strokeWidth="6" />
                <path d="M763 551Q795 554 815 543M750 926Q785 930 800 915M735 1295Q768 1298 785 1285" fill="none" />
                <path d="M770 1636L850 1632 856 1642 900 1639V1675H886V1657H862V1664L720 1675 768 1660z" fill="#a03c3b" />
                <path d="M720 1670L862 1657V1705L700 1714z" fill="#6e3131" />
            </g>
            {[3, 2, 1, 0].map((i) => <Bin key={i} index={i} />)}
            <g {...edge}>
                <path d="M97 222V236L302 355 715 262Q770 247 776 215V195L302 342z" fill="#8d3f3d" />
                <path d="M97 222L628 100 703 143 760 132Q825 135 831 150 828 172 765 178 780 190 775 205 768 238 690 252L302 342z" fill="#9c3a3b" />
                <path d="M670 160Q690 148 742 148L745 160 815 165Q735 180 690 172z" fill="#6a2526" stroke="none" />
                <path d="M765 178Q828 175 831 150V168Q826 182 785 182z" fill="#8d3f3d" />
                <path d="M745 130V150Q775 168 815 158V132z" fill="#7f3737" />
                <path d="M745 75Q750 60 780 60L915 55 925 65 965 62 968 70 966 97H950V82L928 84V130L788 134Q745 134 745 125z" fill="#9c3c3c" />
                <path d="M786 90L928 80V130L786 134z" fill="#723334" />
                <path d="M745 78Q760 90 786 90V134Q745 134 745 125z" fill="#853c3b" />
            </g>
        </g>
    );
}

function Viewport() {
    return (
        <svg viewBox="358 122 1562 881" preserveAspectRatio="xMidYMid slice" className="col-start-1 row-start-1 h-full min-h-0 w-full" role="img" aria-label="Assembly model">
            <defs>
                <linearGradient id="sky" x2="0" y2="1">
                    <stop offset="0" stopColor="#f0f1f5" />
                    <stop offset=".25" stopColor="#e5e8f0" />
                    <stop offset=".45" stopColor="#dcdfea" />
                    <stop offset=".54" stopColor="#e6e8f0" />
                    <stop offset=".64" stopColor="#fafafc" />
                    <stop offset=".85" stopColor="#ffffff" />
                    <stop offset="1" stopColor="#f7f8fa" />
                </linearGradient>
                <radialGradient id="glow" gradientUnits="userSpaceOnUse" cx="0" cy="0" r="1" gradientTransform="translate(480 200) rotate(-8) scale(1050 360)">
                    <stop offset="0" stopColor="#fff" />
                    <stop offset=".5" stopColor="#fff" stopOpacity=".95" />
                    <stop offset="1" stopColor="#fff" stopOpacity="0" />
                </radialGradient>
                <linearGradient id="rightGlow">
                    <stop offset=".85" stopColor="#f3f3f5" stopOpacity="0" />
                    <stop offset="1" stopColor="#f3f3f5" stopOpacity=".6" />
                </linearGradient>
                <linearGradient id="shadow">
                    <stop offset="0" stopColor="#b8b8b9" />
                    <stop offset=".5" stopColor="#8e8f8e" />
                    <stop offset=".72" stopColor="#757575" />
                    <stop offset=".8" stopColor="#5d5150" />
                    <stop offset="1" stopColor="#4a4040" />
                </linearGradient>
                <linearGradient id="mirror" x2="0" y2="1">
                    <stop offset="0" stopColor="#ddd0cf" />
                    <stop offset=".45" stopColor="#e8e3e3" />
                    <stop offset="1" stopColor="#f6f7f8" stopOpacity=".6" />
                </linearGradient>
                <linearGradient id="side">
                    <stop offset="0" stopColor="#713838" />
                    <stop offset=".6" stopColor="#8a4040" />
                    <stop offset="1" stopColor="#7b3a3b" />
                </linearGradient>
                <linearGradient id="pole">
                    <stop offset="0" stopColor="#5e2c2d" />
                    <stop offset=".6" stopColor="#7d3a3c" />
                    <stop offset="1" stopColor="#8f4042" />
                </linearGradient>
            </defs>
            <path d="M358 122h1562v881H358z" fill="url(#sky)" />
            <path d="M358 122h1562v881H358z" fill="url(#glow)" />
            <path d="M358 122h1562v881H358z" fill="url(#rightGlow)" />
            <g transform="translate(360 740) scale(.6122 .3333)">
                <path d="M998 160L1340 60 1392 90 1388 330 1383 760H985L990 530 1178 448V415L990 490z" fill="url(#mirror)" />
                <path d="M998 240L1105 345 1110 275 1340 180V500L1178 560V250L1105 290V345z" fill="#d8cbcb" opacity=".25" />
                <path d="M1350 40l95-8v-8h22v38l-22 14-85 4z" fill="#cbc9c6" />
                <path d="M193 343L305 462 395 425 450 410 455 415 490 405 590 363 645 351 650 355 690 343 785 302 838 291 843 296 880 287 980 243 1030 232 1035 235 1070 228 1310 125Q1336 108 1334 75L1310 55 1030 52 865 102 675 160 480 222z" fill="url(#shadow)" />
                <path d="M998 158L1080 122 1180 100 1300 70 1330 90 1310 125 1070 228 1035 235 998 240z" fill="#4f3636" opacity=".45" />
                <path d="M998 165L1055 228 1035 235 998 240z" fill="#8a4444" opacity=".5" />
            </g>
            <Model />
            <g fontFamily="Open Sans, sans-serif" fontSize="11">
                <path d="M410 934V912" stroke="#238a1c" strokeWidth="4" />
                <path d="M406 913l4-13 4 13z" fill="#1c6e17" />
                <path d="M411 934l22-4" stroke="#d98a45" strokeWidth="4" />
                <path d="M430 924l12 6-11 6z" fill="#b5423a" />
                <path d="M410 935l12 9" stroke="#0a0ab0" strokeWidth="4" />
                <path d="M421 938l5 10-11-1z" fill="#0a0ab0" />
                <text x="409" y="894" fill="#3f8a3a">Y</text>
                <text x="446" y="928" fill="#cf7a45">X</text>
                <text x="427" y="951" fill="#2f77c9">Z</text>
            </g>
        </svg>
    );
}

const taskTabs = ['home', 'library', 'folder', 'palette', 'globe', 'props'];

function GraphicsArea() {
    return (
        <main className="col-start-2 row-span-2 row-start-1 grid min-h-0 grid-cols-1 grid-rows-1">
            <Viewport />
            <nav className="z-10 col-start-1 row-start-1 mt-[57px] flex w-[33px] flex-col self-start justify-self-end border-l border-t border-[#8a8a8a]">
                {taskTabs.map((icon) => (
                    <button key={icon} aria-label={icon} className={clsx('flex h-[30px] items-center justify-center border-b border-[#8a8a8a]', icon === 'home' ? 'bg-[#b4b4b4]' : 'bg-[#323232]')}>
                        <Icon name={icon} className="size-[18px]" />
                    </button>
                ))}
            </nav>
        </main>
    );
}

const navGlyphs = [
    { label: 'First', d: 'M3 2v12M12 2v12L5 8z' },
    { label: 'Previous', d: 'M11 2v12L4 8z' },
    { label: 'Next', d: 'M5 2v12l7-6z' },
    { label: 'Last', d: 'M13 2v12M4 2v12l7-6z' },
];

const sketchTools = [
    ['sPoint', 'sCircle', 'sLine', 'sDash', 'sCross', 'sTrim'],
    ['sTangent', 'sNormal', 'sParallel', 'sCorner', 'sCornerDash'],
    ['sDim', 'sGrid', 'sAngle'],
];

function BottomBars() {
    return (
        <footer className="relative shrink-0 border-t border-[#8a8a8a]">
            <div className="ml-[85px] flex h-5 text-sm text-[#f2f2f2]">
                {navGlyphs.map(({ label, d }) => (
                    <button key={label} aria-label={label} className="flex w-5 items-center justify-center border border-[#8b9494] bg-[#a9acae]">
                        <svg viewBox="0 0 16 16" className="size-3.5"><path d={d} fill="#85898b" stroke="#85898b" /></svg>
                    </button>
                ))}
                <button className="w-[79px] border-r border-[#8a8a8a] font-bold leading-5">Model</button>
                <button className="w-[89px] border-r border-[#8a8a8a] bg-[#323232] leading-5">3D Views</button>
                <button className="w-36 border-r border-[#8a8a8a] bg-[#323232] pr-2 leading-5">Motion Study 1</button>
            </div>
            <div className="flex h-[33px] items-center border-b border-[#8a8a8a]">
                <div className="ml-[3px] mr-2.5 h-[27px] border-l-2 border-dotted border-[#ddd]" />
                {sketchTools.map((group, i) => (
                    <div key={i} className={clsx('flex h-full items-center gap-[5px]', i === 2 ? 'border-r border-[#8a8a8a] pr-2.5' : 'pr-1.5')}>
                        {group.map((icon) => (
                            <button key={icon} aria-label={icon} disabled>
                                <svg viewBox="0 0 24 24" className="size-[22px]" fill="none" stroke="#6c6866" strokeWidth="1.8">{icons[icon]}</svg>
                            </button>
                        ))}
                        {i < 2 && <span className="ml-0.5 h-[22px] w-px bg-[#8a8a8a]" />}
                    </div>
                ))}
            </div>
            <div className="flex h-[21px] items-end text-sm leading-5 text-[#f2f2f2]">
                <span className="pl-px">SOLIDWORKS Premium 2023 SP5.0</span>
                <span className="ml-auto w-[238px]">Under Defined</span>
                <span className="w-[70px]">MMGS</span>
                <Caret className="mb-2 rotate-180 text-white" />
                <svg viewBox="0 0 16 16" className="mb-0.5 ml-6 mr-1.5 size-4" aria-hidden="true">
                    <path d="M1 6l7 6 7-5-1 4-6 5-7-6z" fill="#bbb" stroke="#888" />
                    <path d="M2 2l4 7 2 2 6-4-2-3-4 3-3-6z" fill="#f4f4f4" stroke="#777" />
                </svg>
            </div>
            <div className="h-0.5 bg-[#1c2244]" />
            <div dir="rtl" aria-hidden="true" className="pointer-events-none absolute bottom-6 left-1/2 -translate-x-1/2 whitespace-nowrap font-['DejaVu_Sans',sans-serif] text-[60px] font-bold leading-[50px] text-[#7b7b7b]">
                خـ5سات
            </div>
        </footer>
    );
}

export default function App() {
    return (
        <div className="flex h-screen w-full flex-col overflow-hidden bg-[#4a4a4a] font-['Open_Sans','Noto_Sans',sans-serif]">
            <TitleBar />
            <Ribbon />
            <div className="grid min-h-0 flex-1 grid-cols-[358px_1fr] grid-rows-[28px_1fr]">
                <GraphicsArea />
                <CommandTabs />
                <div className="z-10 col-start-1 row-start-2 flex min-h-0">
                    <ToolColumns />
                    <FeatureTree />
                </div>
            </div>
            <BottomBars />
        </div>
    );
}
